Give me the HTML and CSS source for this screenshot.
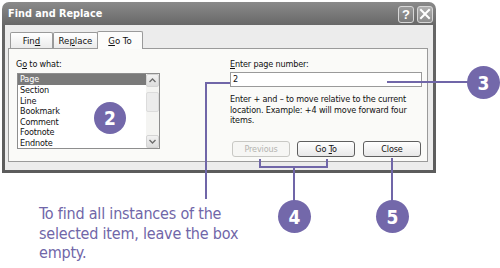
FILE: index.html
```html
<!DOCTYPE html>
<html>
<head>
<meta charset="utf-8">
<link rel="stylesheet" href="styles.css">
</head>
<body>
<div class="stage">
  <div class="window">
    <div class="titlebar">
      <span class="title">Find and Replace</span>
      <div class="tbtns">
        <span class="tb help">?</span>
        <span class="tb close"><svg width="12" height="12" viewBox="0 0 12 12"><path d="M2 2 L10 10 M10 2 L2 10" stroke="#fff" stroke-width="2" stroke-linecap="square"/></svg></span>
      </div>
    </div>
    <div class="wbody">
      <div class="tabs">
        <div class="tab"><span>Fin<u>d</u></span></div>
        <div class="tab"><span>Re<u>p</u>lace</span></div>
        <div class="tab sel"><span><u>G</u>o To</span></div>
      </div>
      <div class="panel">
        <div class="left">
          <div class="lbl">G<u>o</u> to what:</div>
          <div class="list">
            <div class="items">
              <div class="item on">Page</div>
              <div class="item">Section</div>
              <div class="item">Line</div>
              <div class="item">Bookmark</div>
              <div class="item">Comment</div>
              <div class="item">Footnote</div>
              <div class="item">Endnote</div>
            </div>
            <div class="sbar">
              <div class="sbtn"><svg width="7" height="5" viewBox="0 0 7 5"><path d="M0.5 4 L3.5 1 L6.5 4" fill="none" stroke="#6d6d6d" stroke-width="1.4"/></svg></div>
              <div class="track"><div class="thumb"></div></div>
              <div class="sbtn"><svg width="7" height="5" viewBox="0 0 7 5"><path d="M0.5 1 L3.5 4 L6.5 1" fill="none" stroke="#6d6d6d" stroke-width="1.4"/></svg></div>
            </div>
          </div>
        </div>
        <div class="right">
          <div class="lbl"><u>E</u>nter page number:</div>
          <div class="input">2</div>
          <div class="desc">Enter + and – to move relative to the current location. Example: +4 will move forward four items.</div>
          <div class="btns">
            <div class="btn dis"><span>Previous</span></div>
            <div class="btn"><span>Go <u>T</u>o</span></div>
            <div class="btn"><span>Close</span></div>
          </div>
        </div>
      </div>
    </div>
  </div>
  <p class="caption">To find all instances of the<br>selected item, leave the box<br>empty.</p>

  <svg class="leaders" width="500" height="268" viewBox="0 0 500 268">
    <g fill="none" stroke="#7066a8" stroke-width="2">
      <path d="M230 83 H206 V199"/>
      <path d="M387 82 H468"/>
      <path d="M260 159 V167 H327 V159"/>
      <path d="M294 167 V201"/>
      <path d="M392 158 V201"/>
    </g>
  </svg>
  <div class="badge b2">2</div>
  <div class="badge b3">3</div>
  <div class="badge b4">4</div>
  <div class="badge b5">5</div>
</div>
</body>
</html>
```
FILE: styles.css
```css
* { box-sizing: border-box; }
html, body { margin: 0; padding: 0; background: #fff; }
.stage {
  position: relative;
  width: 500px;
  height: 268px;
  overflow: hidden;
  background: #fff;
  font-family: "DejaVu Sans Condensed", "DejaVu Sans", sans-serif;
  font-stretch: condensed;
}
.window {
  margin: 2px 0 0 2px;
  width: 434px;
  background: linear-gradient(#8a8a8a, #666 24px, #5c5c5c);
  border-radius: 7px 7px 0 0;
  padding: 0 3px 3px 3px;
}
.titlebar {
  height: 23px;
  display: flex;
  align-items: center;
  justify-content: space-between;
  padding: 0 0 0 3px;
}
.title {
  color: #fff;
  font-weight: bold;
  font-size: 10.8px;
}
.tbtns { display: flex; gap: 3px; margin-top: 1px; }
.tb {
  width: 16px;
  height: 17px;
  border: 1px solid #d8d8d8;
  border-radius: 3px;
  display: flex;
  align-items: center;
  justify-content: center;
  color: #fff;
  font-weight: bold;
  font-size: 13px;
  font-family: "Liberation Sans", Arial, sans-serif;
}
.help { background: linear-gradient(#9c9c9c, #7a7a7a); }
.close { background: linear-gradient(#b0b0b0, #8c8c8c); }
.wbody {
  background: #ececec;
  height: 145px;
  padding: 6px 5px 0 3px;
}
.tabs {
  height: 17px;
  display: flex;
  align-items: flex-end;
  padding-left: 2px;
  position: relative;
  z-index: 1;
  font-size: 9.5px;
}
.tab {
  height: 16px;
  border: 1px solid #9a9a9a;
  border-bottom: none;
  border-radius: 2px 2px 0 0;
  background: linear-gradient(#ffffff, #ebebeb);
  color: #111;
  display: flex;
  align-items: center;
  justify-content: center;
}
.tab:nth-child(1) { width: 43px; }
.tab:nth-child(2) { width: 45px; }
.tab.sel {
  width: 46px;
  height: 18px;
  margin-bottom: -1px;
  background: #fcfcfb;
  margin-left: -1px;
}
.panel {
  height: 114px;
  border: 1px solid #9a9a9a;
  background: #fafaf8;
  display: flex;
  padding: 10px 5px 0 7px;
  font-size: 9px;
  letter-spacing: -0.15px;
  color: #111;
}
.lbl { height: 11px; line-height: 11px; }
.left { width: 144px; }
.list {
  margin-top: 3px;
  margin-left: 1px;
  width: 143px;
  height: 76px;
  border: 1px solid #8e8e8e;
  background: #fff;
  display: flex;
}
.items { flex: 1; }
.item {
  height: 10.5px;
  line-height: 10.5px;
  padding-left: 2px;
}
.item.on { background: #7a7a7a; color: #fff; height: 11px; }
.sbar {
  width: 13px;
  display: flex;
  flex-direction: column;
  background: #f4f4f2;
}
.sbtn {
  height: 13px;
  border: 1px solid #d4d4d4;
  border-radius: 2px;
  background: linear-gradient(#f2f2f2, #dcdcdc);
  display: flex;
  align-items: center;
  justify-content: center;
}
.track { flex: 1; padding: 3px 0; }
.thumb {
  height: 20px;
  margin-top: 2px;
  border: 1px solid #dcdcdc;
  border-radius: 2px;
  background: #ececec;
}
.right {
  margin-left: 70px;
  width: 192px;
  display: flex;
  flex-direction: column;
}
.input {
  margin-top: 2px;
  height: 15px;
  border: 1px solid #9a9a9a;
  background: #fff;
  padding-left: 2px;
  line-height: 13px;
}
.desc {
  margin-top: 7px;
  line-height: 10.5px;
  width: 190px;
}
.btns {
  margin-top: 15px;
  display: flex;
  gap: 7px;
  padding-left: 2px;
}
.btn {
  width: 58px;
  height: 16px;
  border: 1px solid #5f5f5f;
  border-radius: 3px;
  background: linear-gradient(#ffffff, #e8e8e8);
  display: flex;
  align-items: center;
  justify-content: center;
}
.btn:last-child { margin-left: 1px; }
.btn.dis { border-color: #c8c8c4; color: #b4b4b0; background: #f6f6f4; }
.caption {
  margin: 31px 0 0 39px;
  font-size: 16px;
  letter-spacing: -0.2px;
  line-height: 19.5px;
  color: #7066a8;
}
.leaders { position: absolute; left: 0; top: 0; }
.badge {
  position: absolute;
  width: 33px;
  height: 33px;
  border-radius: 50%;
  background: #7368aa;
  color: #fff;
  font-weight: bold;
  font-size: 19px;
  display: flex;
  align-items: center;
  justify-content: center;
}
.b2 { left: 94px; top: 102px; width: 32px; height: 32px; }
.b3 { left: 467px; top: 66px; }
.b4 { left: 278px; top: 200px; }
.b5 { left: 376px; top: 200px; }
```
